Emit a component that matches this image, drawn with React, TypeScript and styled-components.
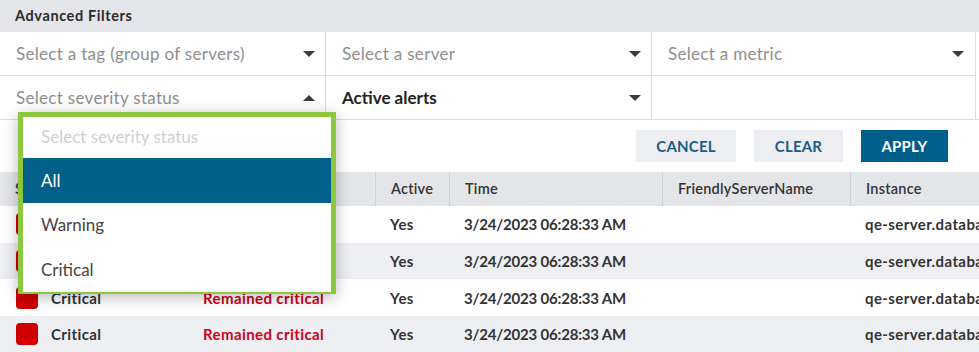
import React from "react";
import styled, { createGlobalStyle } from "styled-components";

const Global = createGlobalStyle`
  html, body { margin: 0; padding: 0; background: #fff; }
  body { font-family: Lato, "Noto Sans", sans-serif; color: #333; width: 979px; height: 352px; overflow: hidden; }
  * { box-sizing: border-box; }
`;

const Page = styled.div`
  position: relative;
  width: 979px;
  height: 352px;
  overflow: hidden;
`;

const TitleBar = styled.div`
  height: 32px;
  background: #e4e5e9;
  display: flex;
  align-items: center;
  padding: 0 0 1px 15px;
  font-size: 14.5px;
  font-weight: 700;
  letter-spacing: 0.6px;
  color: #2a2a2a;
`;

const FilterGrid = styled.div`
  display: grid;
  grid-template-columns: 326px 326px 327px;
  grid-auto-rows: 43.5px;
  border-bottom: 1px solid #dcdcdf;
`;

const Cell = styled.div<{ $last?: boolean; $top?: boolean }>`
  position: relative;
  display: flex;
  align-items: center;
  justify-content: space-between;
  padding: 0 10px 0 16px;
  border-right: 1px solid #dcdcdf;
  border-bottom: ${(p) => (p.$top ? "1px solid #dcdcdf" : "none")};
  ${(p) => (p.$last ? "margin-right: 3px; padding-right: 8px; padding-right: 11px;" : "")}
`;

const CellText = styled.span<{ $value?: boolean }>`
  font-size: 17px;
  font-weight: ${(p) => (p.$value ? 700 : 400)};
  color: ${(p) => (p.$value ? "#222" : "#8e8e8e")};
  letter-spacing: ${(p) => (p.$value ? "0" : "0.3px")};
`;

const Caret = styled.span<{ $up?: boolean }>`
  width: 0;
  height: 0;
  border-left: 6px solid transparent;
  border-right: 6px solid transparent;
  ${(p) =>
    p.$up
      ? "border-bottom: 6px solid #3f3a33;"
      : "border-top: 6px solid #3f3a33;"}
  margin-top: 2px;
`;

const ButtonRow = styled.div`
  display: flex;
  justify-content: flex-end;
  gap: 18px;
  padding: 10px 31px 10px 0;
`;

const Button = styled.button<{ $primary?: boolean; $w: number }>`
  width: ${(p) => p.$w}px;
  height: 32px;
  border: none;
  background: ${(p) => (p.$primary ? "#005f8a" : "#edeef1")};
  color: ${(p) => (p.$primary ? "#fff" : "#1d5b82")};
  font-family: Lato, "Noto Sans", sans-serif;
  font-weight: 700;
  font-size: 15px;
  letter-spacing: 0.2px;
  padding: 0;
`;

const Table = styled.div`
  display: flex;
  flex-direction: column;
`;

const cols = "188px 187px 74px 213px 188px 129px";

const HeadRow = styled.div`
  display: grid;
  grid-template-columns: ${cols};
  height: 34px;
  background: #e4e5e9;
`;

const HeadCell = styled.div<{ $sep?: boolean }>`
  display: flex;
  align-items: center;
  padding: 0 0 1px 15px;
  font-size: 14.5px;
  font-weight: 600;
  letter-spacing: 0.25px;
  color: #333;
  border-left: ${(p) => (p.$sep ? "1px solid #cfd0d4" : "none")};
  white-space: nowrap;
`;

const BodyRow = styled.div<{ $alt?: boolean }>`
  display: grid;
  grid-template-columns: ${cols};
  height: 36.7px;
  background: ${(p) => (p.$alt ? "#eeeff2" : "#fff")};
`;

const BodyCell = styled.div<{ $red?: boolean; $tight?: boolean }>`
  display: flex;
  align-items: center;
  gap: 13px;
  padding-left: 15px;
  font-size: 15px;
  font-weight: 700;
  letter-spacing: ${(p) => (p.$tight ? "-0.2px" : "0.4px")};
  color: ${(p) => (p.$red ? "#d0021b" : "#333")};
  white-space: nowrap;
  overflow: hidden;
`;

const SevSquare = styled.span`
  width: 22px;
  height: 22px;
  border-radius: 4px;
  background: #d10000;
  flex: none;
  margin-left: 1px;
`;

const Dropdown = styled.div`
  position: absolute;
  left: 18px;
  top: 112px;
  width: 318px;
  height: 182px;
  border: 5px solid #8dc63f;
  background: #fff;
  box-shadow: 0 3px 14px rgba(0, 0, 0, 0.28);
  display: flex;
  flex-direction: column;
`;

const Option = styled.div<{ $active?: boolean; $placeholder?: boolean }>`
  height: ${(p) => (p.$placeholder ? 41 : 44.5)}px;
  flex: none;
  display: flex;
  align-items: center;
  padding-left: 18px;
  padding-bottom: ${(p) => (p.$placeholder ? 3 : 0)}px;
  font-size: 17px;
  background: ${(p) => (p.$active ? "#00608a" : "#fff")};
  color: ${(p) => (p.$active ? "#fff" : p.$placeholder ? "#cfcfcf" : "#4a443c")};
`;

const rows = [false, true, false, true];

export default function App() {
  return (
    <Page>
      <Global />
      <TitleBar>Advanced Filters</TitleBar>
      <FilterGrid>
        <Cell $top>
          <CellText>Select a tag (group of servers)</CellText>
          <Caret />
        </Cell>
        <Cell $top>
          <CellText>Select a server</CellText>
          <Caret />
        </Cell>
        <Cell $top $last>
          <CellText>Select a metric</CellText>
          <Caret />
        </Cell>
        <Cell>
          <CellText>Select severity status</CellText>
          <Caret $up />
        </Cell>
        <Cell>
          <CellText $value>Active alerts</CellText>
          <Caret />
        </Cell>
        <Cell $last />
      </FilterGrid>
      <ButtonRow>
        <Button $w={100}>CANCEL</Button>
        <Button $w={89}>CLEAR</Button>
        <Button $w={87} $primary>
          APPLY
        </Button>
      </ButtonRow>
      <Table>
        <HeadRow>
          <HeadCell>Severity</HeadCell>
          <HeadCell $sep>State</HeadCell>
          <HeadCell $sep>Active</HeadCell>
          <HeadCell $sep>Time</HeadCell>
          <HeadCell $sep>FriendlyServerName</HeadCell>
          <HeadCell $sep>Instance</HeadCell>
        </HeadRow>
        {rows.map((alt, i) => (
          <BodyRow key={i} $alt={alt}>
            <BodyCell>
              <SevSquare />
              Critical
            </BodyCell>
            <BodyCell $red>Remained critical</BodyCell>
            <BodyCell>Yes</BodyCell>
            <BodyCell $tight>3/24/2023 06:28:33 AM</BodyCell>
            <BodyCell />
            <BodyCell>qe-server.database.local</BodyCell>
          </BodyRow>
        ))}
      </Table>
      <Dropdown>
        <Option $placeholder>Select severity status</Option>
        <Option $active>All</Option>
        <Option>Warning</Option>
        <Option>Critical</Option>
      </Dropdown>
    </Page>
  );
}
